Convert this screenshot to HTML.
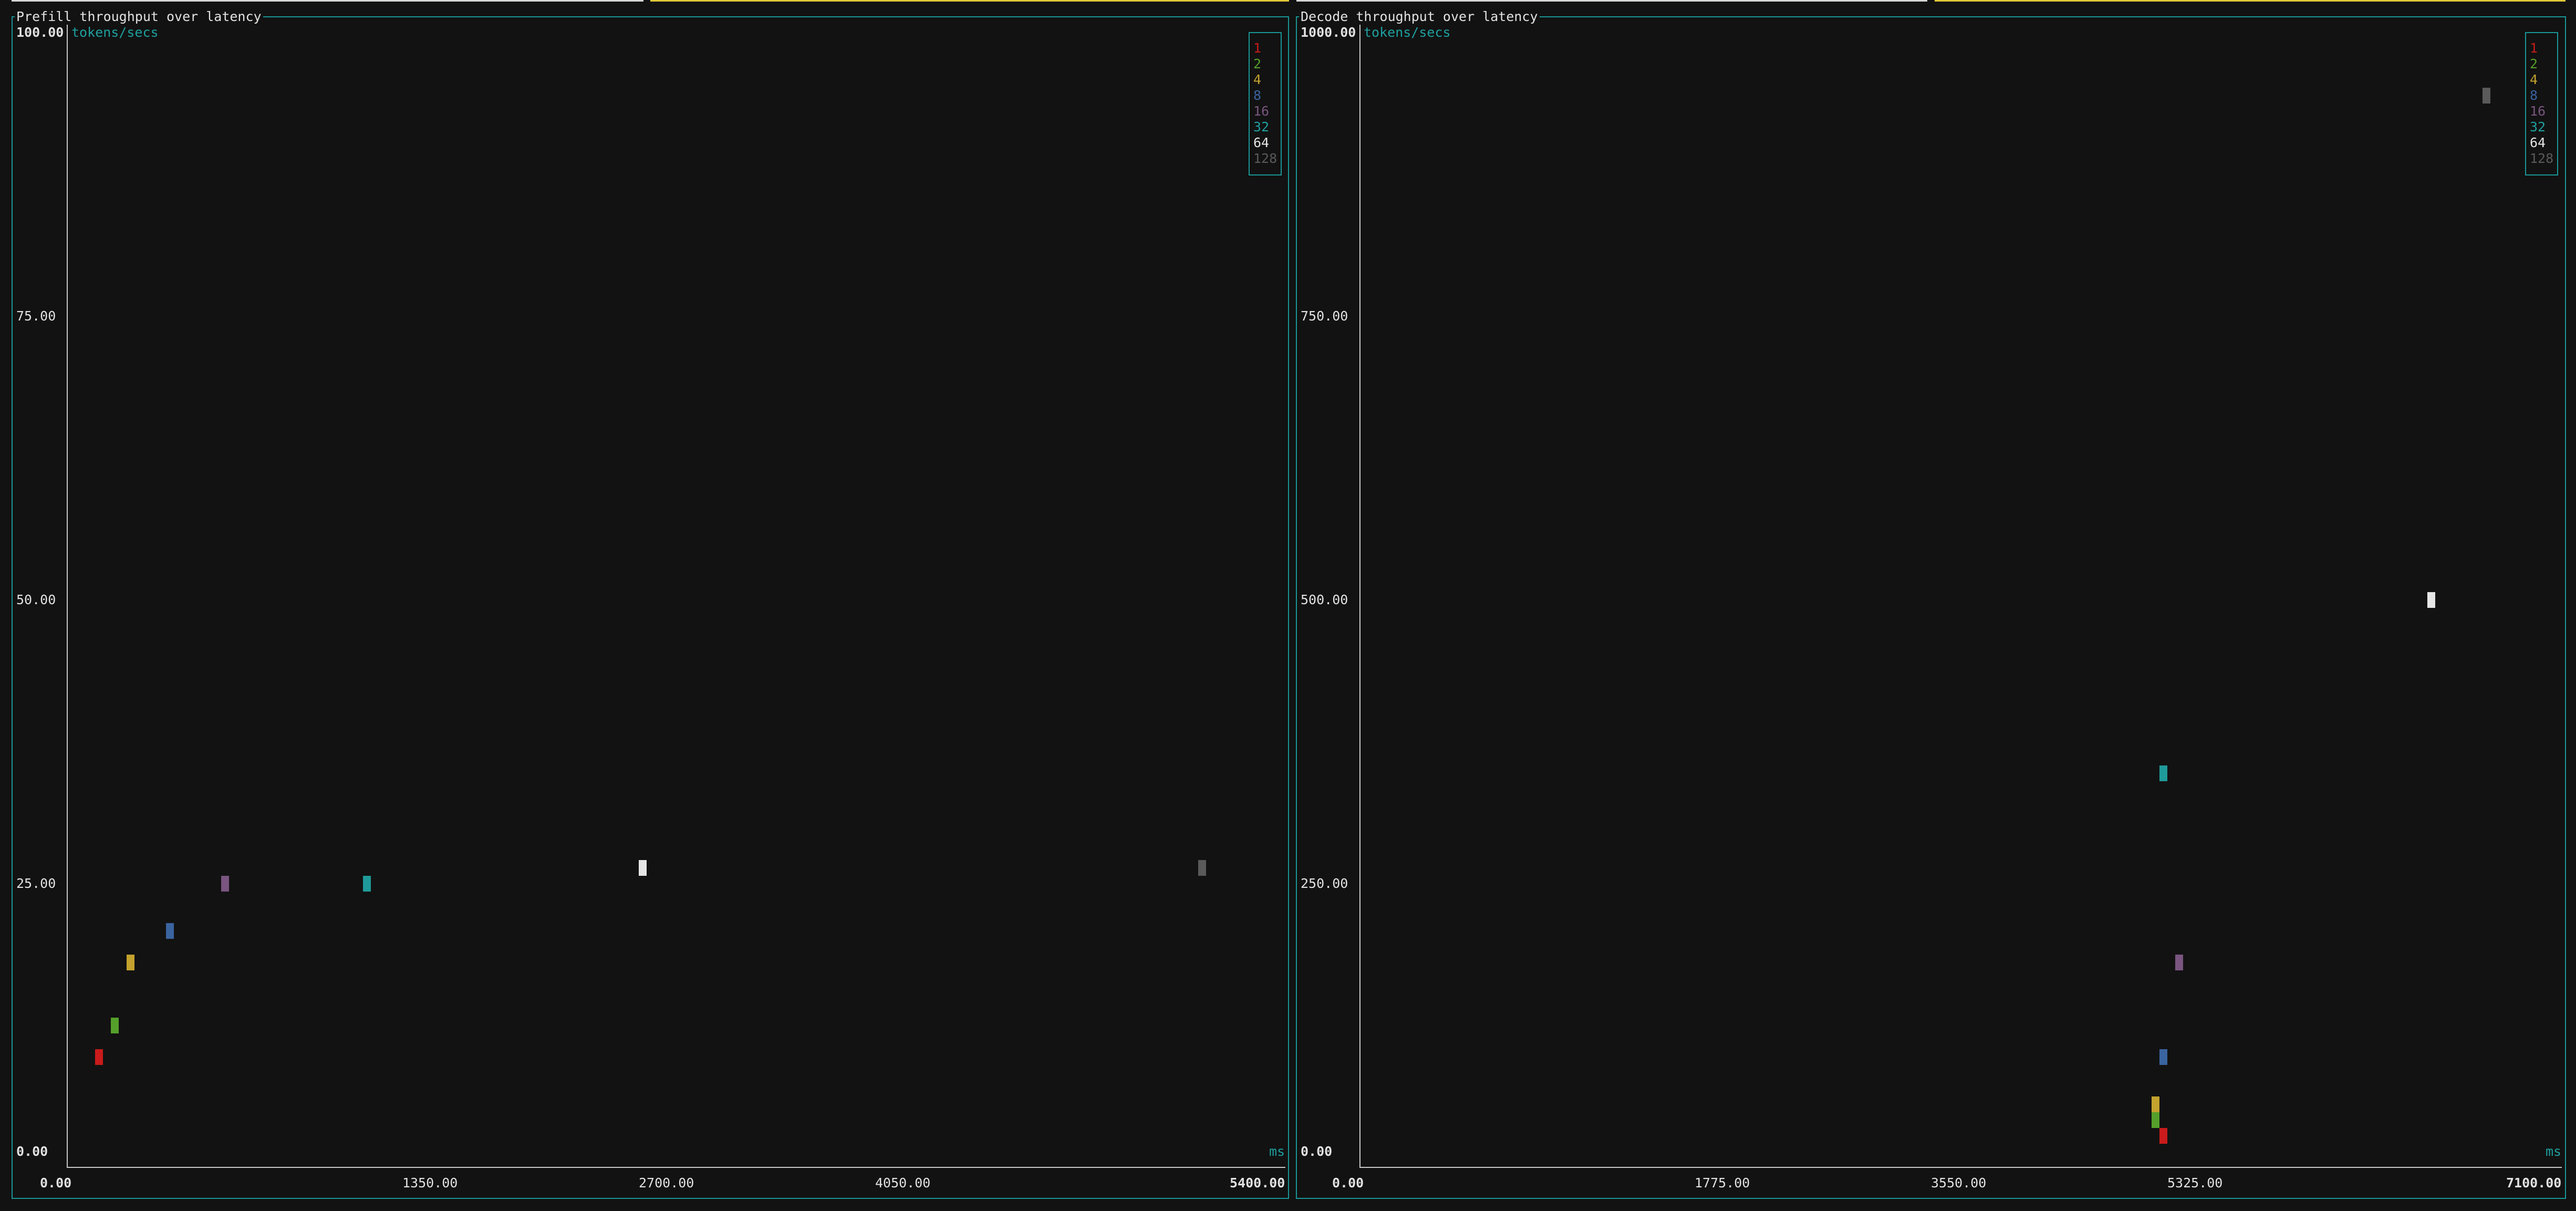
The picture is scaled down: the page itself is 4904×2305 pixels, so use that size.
<!DOCTYPE html>
<html><head><meta charset="utf-8"><style>
html,body{margin:0;padding:0;background:#121212;}
body{width:4904px;height:2305px;position:relative;overflow:hidden;font-family:"DejaVu Sans Mono","Liberation Mono",monospace;font-size:25px;line-height:30px;color:#e2e2e2;}
.t{position:absolute;white-space:pre;height:30px;}
.b{font-weight:bold;}
.c{color:#1fa0a0;}
.l{position:absolute;}
.p{position:absolute;width:15px;height:30px;}
</style></head><body>
<!-- top remnant lines -->
<div class="l" style="left:22px;top:0;width:1203px;height:3px;background:#d6d6d6"></div>
<div class="l" style="left:1238px;top:0;width:1216px;height:3px;background:#e0c63a"></div>
<div class="l" style="left:2468px;top:0;width:1201px;height:3px;background:#d6d6d6"></div>
<div class="l" style="left:3683px;top:0;width:1201px;height:3px;background:#e0c63a"></div>

<!-- LEFT PANEL border -->
<div class="l" style="left:22px;top:31px;width:2432px;height:2251px;border:2px solid #1a9696;box-sizing:border-box"></div>
<div class="t" style="left:28px;top:17px;background:#121212;padding:0 3px">Prefill throughput over latency</div>
<!-- axes -->
<div class="l" style="left:127px;top:47px;width:2px;height:2176px;background:#c8c8c8"></div>
<div class="l" style="left:127px;top:2221px;width:2320px;height:2px;background:#c8c8c8"></div>
<div class="t b" style="left:31px;top:47px">100.00</div>
<div class="t c" style="left:136px;top:47px">tokens/secs</div>
<div class="t" style="left:31px;top:587px">75.00</div>
<div class="t" style="left:31px;top:1127px">50.00</div>
<div class="t" style="left:31px;top:1667px">25.00</div>
<div class="t b" style="left:31px;top:2177px">0.00</div>
<div class="t c" style="left:2416px;top:2177px">ms</div>
<div class="t b" style="left:76px;top:2237px">0.00</div>
<div class="t" style="left:766px;top:2237px">1350.00</div>
<div class="t" style="left:1216px;top:2237px">2700.00</div>
<div class="t" style="left:1666px;top:2237px">4050.00</div>
<div class="t b" style="left:2341px;top:2237px">5400.00</div>
<!-- legend -->
<div class="l" style="left:2377px;top:61px;width:63px;height:273px;border:2px solid #1a9696;box-sizing:border-box"></div>
<div class="t" style="left:2386px;top:77px;color:#c91b1b">1</div>
<div class="t" style="left:2386px;top:107px;color:#55a02a">2</div>
<div class="t" style="left:2386px;top:137px;color:#c4a22e">4</div>
<div class="t" style="left:2386px;top:167px;color:#3a64a0">8</div>
<div class="t" style="left:2386px;top:197px;color:#7a5580">16</div>
<div class="t" style="left:2386px;top:227px;color:#1fa0a0">32</div>
<div class="t" style="left:2386px;top:257px;color:#e6e6e6">64</div>
<div class="t" style="left:2386px;top:287px;color:#5a5a5a">128</div>
<!-- points -->
<div class="p" style="left:181px;top:1997px;background:#c91b1b"></div>
<div class="p" style="left:211px;top:1937px;background:#55a02a"></div>
<div class="p" style="left:241px;top:1817px;background:#c4a22e"></div>
<div class="p" style="left:316px;top:1757px;background:#3a64a0"></div>
<div class="p" style="left:421px;top:1667px;background:#7a5580"></div>
<div class="p" style="left:691px;top:1667px;background:#1f9a9a"></div>
<div class="p" style="left:1216px;top:1637px;background:#e6e6e6"></div>
<div class="p" style="left:2281px;top:1637px;background:#5a5a5a"></div>

<!-- RIGHT PANEL border -->
<div class="l" style="left:2467px;top:31px;width:2418px;height:2251px;border:2px solid #1a9696;box-sizing:border-box"></div>
<div class="t" style="left:2473px;top:17px;background:#121212;padding:0 3px">Decode throughput over latency</div>
<div class="l" style="left:2588px;top:47px;width:2px;height:2176px;background:#c8c8c8"></div>
<div class="l" style="left:2588px;top:2221px;width:2289px;height:2px;background:#c8c8c8"></div>
<div class="t b" style="left:2476px;top:47px">1000.00</div>
<div class="t c" style="left:2596px;top:47px">tokens/secs</div>
<div class="t" style="left:2476px;top:587px">750.00</div>
<div class="t" style="left:2476px;top:1127px">500.00</div>
<div class="t" style="left:2476px;top:1667px">250.00</div>
<div class="t b" style="left:2476px;top:2177px">0.00</div>
<div class="t c" style="left:4846px;top:2177px">ms</div>
<div class="t b" style="left:2536px;top:2237px">0.00</div>
<div class="t" style="left:3226px;top:2237px">1775.00</div>
<div class="t" style="left:3676px;top:2237px">3550.00</div>
<div class="t" style="left:4126px;top:2237px">5325.00</div>
<div class="t b" style="left:4771px;top:2237px">7100.00</div>
<div class="l" style="left:4807px;top:61px;width:63px;height:273px;border:2px solid #1a9696;box-sizing:border-box"></div>
<div class="t" style="left:4816px;top:77px;color:#c91b1b">1</div>
<div class="t" style="left:4816px;top:107px;color:#55a02a">2</div>
<div class="t" style="left:4816px;top:137px;color:#c4a22e">4</div>
<div class="t" style="left:4816px;top:167px;color:#3a64a0">8</div>
<div class="t" style="left:4816px;top:197px;color:#7a5580">16</div>
<div class="t" style="left:4816px;top:227px;color:#1fa0a0">32</div>
<div class="t" style="left:4816px;top:257px;color:#e6e6e6">64</div>
<div class="t" style="left:4816px;top:287px;color:#5a5a5a">128</div>
<div class="p" style="left:4726px;top:167px;background:#5a5a5a"></div>
<div class="p" style="left:4621px;top:1127px;background:#e6e6e6"></div>
<div class="p" style="left:4111px;top:1457px;background:#1f9a9a"></div>
<div class="p" style="left:4141px;top:1817px;background:#7a5580"></div>
<div class="p" style="left:4111px;top:1997px;background:#3a64a0"></div>
<div class="p" style="left:4096px;top:2087px;background:#c4a22e"></div>
<div class="p" style="left:4096px;top:2117px;background:#55a02a"></div>
<div class="p" style="left:4111px;top:2147px;background:#c91b1b"></div>
</body></html>
